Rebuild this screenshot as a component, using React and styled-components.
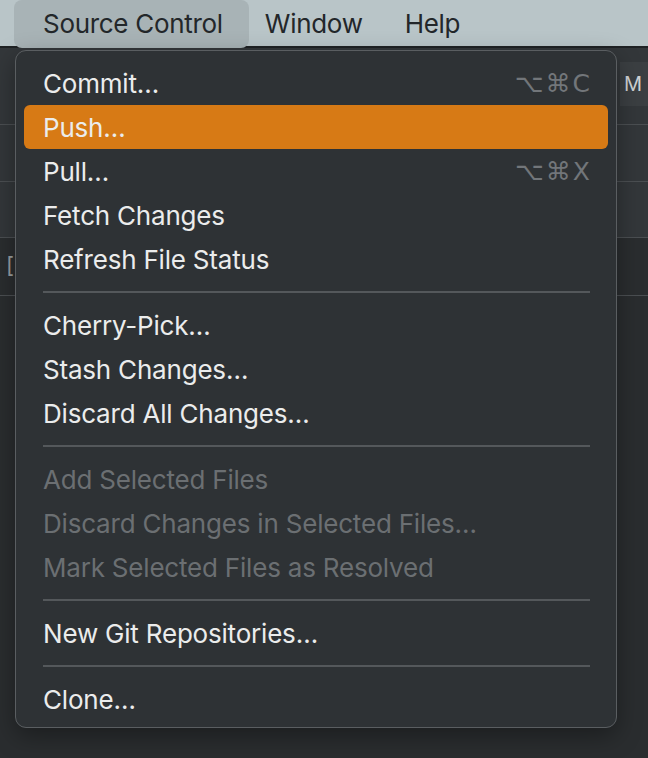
import { createGlobalStyle, styled } from "styled-components";

const GlobalStyle = createGlobalStyle`
  html, body {
    margin: 0;
    background: #2a2d2f;
  }
  body {
    font-family: "Inter", "Noto Sans", "DejaVu Sans", sans-serif;
    -webkit-font-smoothing: antialiased;
  }
`;

const menu = [
  { label: "Commit…", shortcut: "⌥⌘C" },
  { label: "Push…", active: true },
  { label: "Pull…", shortcut: "⌥⌘X" },
  { label: "Fetch Changes" },
  { label: "Refresh File Status" },
  { separator: true },
  { label: "Cherry-Pick…" },
  { label: "Stash Changes…" },
  { label: "Discard All Changes…" },
  { separator: true },
  { label: "Add Selected Files", disabled: true },
  { label: "Discard Changes in Selected Files…", disabled: true },
  { label: "Mark Selected Files as Resolved", disabled: true },
  { separator: true },
  { label: "New Git Repositories…" },
  { separator: true },
  { label: "Clone…" },
];

const App = () => {
  return (
    <>
      <GlobalStyle />
      <Screen>
        <MenuBar>
          <MenuTitle $open>Source Control</MenuTitle>
          <MenuTitle>Window</MenuTitle>
          <MenuTitle>Help</MenuTitle>
        </MenuBar>

        <Backdrop>
          <BgRow $h={77}>
            <Chip>M</Chip>
          </BgRow>
          <BgRow $h={57} />
          <BgRow $h={56} />
          <BgRow $h={58} $dark>
            <Bracket>[</Bracket>
          </BgRow>
          <BgRow $h={420} $dark $last />
        </Backdrop>

        <Dropdown>
          {menu.map((item, i) =>
            item.separator ? (
              <Separator key={i} />
            ) : (
              <Item key={i} $active={item.active} $disabled={item.disabled}>
                <span>{item.label}</span>
                {item.shortcut && <Shortcut>{item.shortcut}</Shortcut>}
              </Item>
            )
          )}
        </Dropdown>
      </Screen>
    </>
  );
};

const Screen = styled.div`
  position: relative;
  width: 648px;
  height: 758px;
  overflow: hidden;
  background: #2a2d2f;
`;

const MenuBar = styled.div`
  height: 46px;
  display: flex;
  align-items: center;
  gap: 42px;
  padding-left: 43px;
  background: #b9c5c8;
  border-bottom: 2px solid #1f2224;
  isolation: isolate;
`;

const MenuTitle = styled.div`
  position: relative;
  font-size: 26px;
  letter-spacing: -0.3px;
  color: #23272a;
  line-height: 47px;

  ${({ $open }) =>
    $open &&
    `
    &::before {
      content: "";
      position: absolute;
      top: 0;
      bottom: -1px;
      left: -29px;
      right: -26px;
      background: #a8b3b6;
      border-radius: 8px;
      z-index: -1;
    }
  `}
`;

const Backdrop = styled.div`
  display: flex;
  flex-direction: column;
`;

const BgRow = styled.div`
  position: relative;
  height: ${({ $h }) => $h}px;
  flex-shrink: 0;
  box-sizing: border-box;
  background: ${({ $dark }) => ($dark ? "#2a2d2f" : "#33373a")};
  border-bottom: ${({ $last }) => ($last ? "none" : "1px solid #4b4f52")};
`;

const Chip = styled.div`
  position: absolute;
  top: 14px;
  right: 0;
  width: 28px;
  height: 44px;
  display: flex;
  align-items: center;
  padding-left: 4px;
  box-sizing: border-box;
  background: #3b3f42;
  color: #cfd2d4;
  font-size: 20px;
`;

const Bracket = styled.div`
  position: absolute;
  left: 6px;
  top: 14px;
  color: #9aa0a3;
  font-size: 22px;
`;

const Dropdown = styled.div`
  position: absolute;
  top: 50px;
  left: 15px;
  width: 602px;
  height: 678px;
  box-sizing: border-box;
  padding: 10px 8px 7px;
  background: #2e3235;
  border: 1px solid #5a5e61;
  border-radius: 11px;
  box-shadow: 0 8px 24px rgba(0, 0, 0, 0.35);
  display: flex;
  flex-direction: column;
`;

const Item = styled.div`
  height: 44px;
  flex-shrink: 0;
  display: flex;
  align-items: center;
  justify-content: space-between;
  padding: 0 18px 0 19px;
  border-radius: 6px;
  font-size: 26px;
  letter-spacing: -0.2px;
  color: ${({ $disabled }) => ($disabled ? "#6b6f72" : "#ebecec")};
  background: ${({ $active }) => ($active ? "#d77a15" : "transparent")};
`;

const Shortcut = styled.span`
  font-family: "DejaVu Sans", sans-serif;
  font-size: 25px;
  color: #72767a;
  letter-spacing: 2px;
  margin-right: -2px;
`;

const Separator = styled.div`
  height: 2px;
  flex-shrink: 0;
  margin: 10px 18px 10px 19px;
  background: #54585b;
`;

export default App;
